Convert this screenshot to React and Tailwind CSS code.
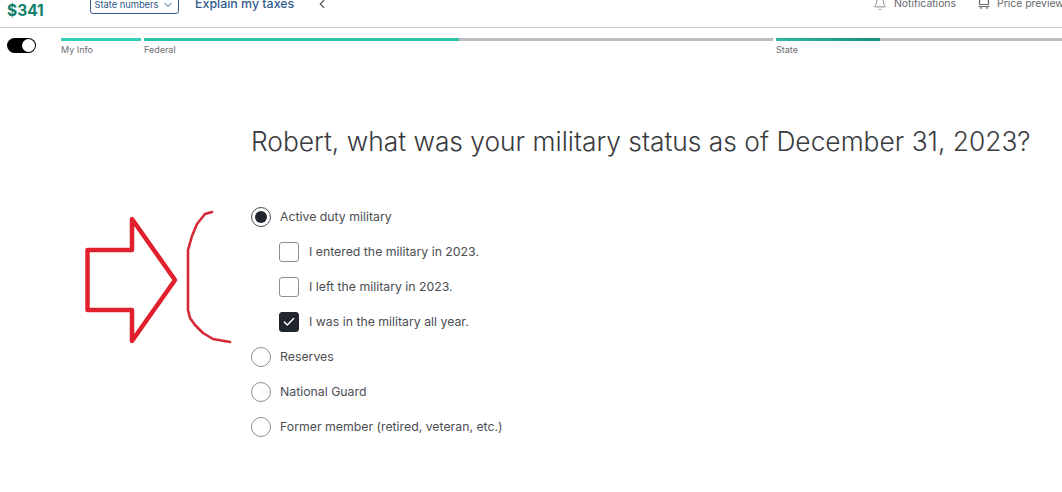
import React from "react";
import { ChevronDown, ChevronLeft, Bell, Check } from "lucide-react";

function Radio({ checked, label }) {
  return (
    <div className="flex items-center h-[20px] gap-[9px]">
      <div className={"w-[20px] h-[20px] rounded-full border flex items-center justify-center bg-white " + (checked ? "border-[#4c4e53]" : "border-[#8d8e93]")}>
        {checked && <div className="w-[12px] h-[12px] rounded-full bg-[#21262e]" />}
      </div>
      <span className="text-[12.3px] text-[#4c4e53]">{label}</span>
    </div>
  );
}

function Box({ checked, label }) {
  return (
    <div className="flex items-center h-[20px] gap-[10px] ml-[28px]">
      <div className={"w-[20px] h-[20px] rounded-[3px] border flex items-center justify-center " + (checked ? "bg-[#21262e] border-[#21262e]" : "bg-white border-[#8d8e93]")}>
        {checked && <Check size={14} color="white" strokeWidth={2.5} />}
      </div>
      <span className="text-[12.3px] text-[#4c4e53]">{label}</span>
    </div>
  );
}

function Segment({ width, label, fill, fillClass }) {
  return (
    <div className={width}>
      <div className="h-[3px] bg-[#bcbdc1] flex">
        <div className={"h-full " + fill + " " + fillClass} />
      </div>
      <div className="text-[9px] text-[#6b6c72] mt-[3px] leading-[12px]">{label}</div>
    </div>
  );
}

export default function App() {
  return (
    <div className="relative w-[1062px] h-[492px] overflow-hidden bg-white font-['Inter',sans-serif]">
      <header className="h-[28px] border-b border-[#c9cacc] flex items-start">
        <div className="w-[90px] pl-[7px] pt-[2px] text-[15.5px] leading-[18px] font-bold text-[#10806a]">$341</div>
        <div className="w-[89px] h-[27px] mt-[-13px] border border-[#33598a] rounded-[3px] flex items-center justify-center gap-[4px] pt-[9px] text-[9.3px] text-[#2b5688]">
          State numbers
          <ChevronDown size={12} />
        </div>
        <div className="ml-[16px] mt-[-4px] text-[12.4px] leading-[16px] font-medium text-[#2f5b8c] whitespace-nowrap">Explain my taxes</div>
        <ChevronLeft size={14} className="ml-[21px] mt-[-3px] text-[#55575c]" />
        <div className="ml-auto flex items-start text-[10.4px] leading-[14px] text-[#66686d] mt-[-3px]">
          <Bell size={14} strokeWidth={1.3} className="mr-[7px]" />
          <span className="mr-[21px]">Notifications</span>
          <svg width="14" height="14" viewBox="0 0 14 14" fill="none" stroke="#66686d" strokeWidth="1.2" className="mr-[6px]">
            <path d="M2.5 0.5h9v7h-9z M1.5 9.5h11 M4 9.5v2.5 M10 9.5v2.5" />
          </svg>
          <span className="whitespace-nowrap w-[65px]">Price preview</span>
        </div>
      </header>

      <div className="flex items-start mt-[10px]">
        <div className="w-[61px] pl-[7px]">
          <div className="w-[29px] h-[15px] rounded-full bg-black relative">
            <div className="absolute right-[1px] top-[1px] w-[13px] h-[13px] rounded-full bg-white" />
          </div>
        </div>
        <div className="flex gap-[3px] flex-1">
          <Segment width="w-[80px]" label="My Info" fill="w-full" fillClass="bg-[#34d0b6]" />
          <Segment width="w-[629px]" label="Federal" fill="w-[315px]" fillClass="bg-[#2cc4a8]" />
          <Segment width="w-[286px]" label="State" fill="w-[104px]" fillClass="bg-gradient-to-r from-[#2cb8a0] to-[#178f7c]" />
        </div>
      </div>

      <main className="pl-[251px] pt-[69px]">
        <h1 className="text-[26.35px] leading-[32px] font-light text-[#393a3d] whitespace-nowrap">
          Robert, what was your military status as of December 31, 2023?
        </h1>
        <div className="mt-[50px] flex flex-col gap-[15px]">
          <Radio checked label="Active duty military" />
          <Box label="I entered the military in 2023." />
          <Box label="I left the military in 2023." />
          <Box checked label="I was in the military all year." />
          <Radio label="Reserves" />
          <Radio label="National Guard" />
          <Radio label="Former member (retired, veteran, etc.)" />
        </div>
      </main>

      <svg className="absolute left-0 top-0 pointer-events-none" width="1062" height="492" fill="none">
        <path d="M175 280L132 219V250H87.5V310H132V341Z" stroke="#e0202c" strokeWidth="4.5" strokeLinejoin="round" />
        <path d="M212 212L205 214L197 224L192 236L188 250V310L190 318L195 325L203 333L213 339L230 342" stroke="#d42a35" strokeWidth="2.6" strokeLinejoin="round" strokeLinecap="round" />
      </svg>
    </div>
  );
}
